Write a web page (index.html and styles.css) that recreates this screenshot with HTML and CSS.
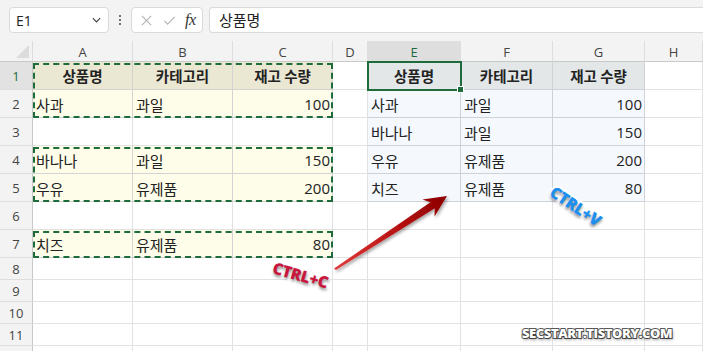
FILE: index.html
```html
<!DOCTYPE html>
<html>
<head>
    <link rel="stylesheet" href="styles.css">
</head>
<body>
    <div class="toolbar">
        <div class="namebox">
            <span>E1</span>
            <svg class="chev" viewBox="0 0 10 6"><path d="M1,1 L5,5 L9,1" fill="none" stroke="#444" stroke-width="1.3"/></svg>
        </div>
        <div class="dots"><i></i><i></i><i></i></div>
        <div class="fxbox">
            <svg viewBox="0 0 14 14" class="ico"><path d="M2,2 L12,12 M12,2 L2,12" stroke="#b4b4b4" stroke-width="1.2" fill="none"/></svg>
            <svg viewBox="0 0 14 14" class="ico"><path d="M1.5,7.5 L5,11 L12.5,3" stroke="#b4b4b4" stroke-width="1.2" fill="none"/></svg>
            <span class="fx">fx</span>
        </div>
        <div class="formula">상품명</div>
    </div>

    <div class="sheet">
        <div class="corner"><span class="tri"></span></div>
        <div class="ch">A</div><div class="ch">B</div><div class="ch">C</div><div class="ch">D</div>
        <div class="ch sel">E</div><div class="ch">F</div><div class="ch">G</div><div class="ch">H</div>

        <div class="rh sel">1</div>
        <div class="c hd">상품명</div><div class="c hd">카테고리</div><div class="c hd">재고 수량</div><div class="c"></div>
        <div class="c rhd">상품명</div><div class="c rhd">카테고리</div><div class="c rhd">재고 수량</div><div class="c"></div>

        <div class="rh">2</div>
        <div class="c dt">사과</div><div class="c dt">과일</div><div class="c dt num">100</div><div class="c"></div>
        <div class="c rdt">사과</div><div class="c rdt">과일</div><div class="c rdt num">100</div><div class="c"></div>

        <div class="rh">3</div>
        <div class="c"></div><div class="c"></div><div class="c"></div><div class="c"></div>
        <div class="c rdt">바나나</div><div class="c rdt">과일</div><div class="c rdt num">150</div><div class="c"></div>

        <div class="rh">4</div>
        <div class="c dt">바나나</div><div class="c dt">과일</div><div class="c dt num">150</div><div class="c"></div>
        <div class="c rdt">우유</div><div class="c rdt">유제품</div><div class="c rdt num">200</div><div class="c"></div>

        <div class="rh">5</div>
        <div class="c dt">우유</div><div class="c dt">유제품</div><div class="c dt num">200</div><div class="c"></div>
        <div class="c rdt">치즈</div><div class="c rdt">유제품</div><div class="c rdt num">80</div><div class="c"></div>

        <div class="rh">6</div>
        <div class="c"></div><div class="c"></div><div class="c"></div><div class="c"></div>
        <div class="c"></div><div class="c"></div><div class="c"></div><div class="c"></div>

        <div class="rh">7</div>
        <div class="c dt">치즈</div><div class="c dt">유제품</div><div class="c dt num">80</div><div class="c"></div>
        <div class="c"></div><div class="c"></div><div class="c"></div><div class="c"></div>

        <div class="rh">8</div>
        <div class="c"></div><div class="c"></div><div class="c"></div><div class="c"></div>
        <div class="c"></div><div class="c"></div><div class="c"></div><div class="c"></div>
        <div class="rh">9</div>
        <div class="c"></div><div class="c"></div><div class="c"></div><div class="c"></div>
        <div class="c"></div><div class="c"></div><div class="c"></div><div class="c"></div>
        <div class="rh">10</div>
        <div class="c"></div><div class="c"></div><div class="c"></div><div class="c"></div>
        <div class="c"></div><div class="c"></div><div class="c"></div><div class="c"></div>
        <div class="rh">11</div>
        <div class="c"></div><div class="c"></div><div class="c"></div><div class="c"></div>
        <div class="c"></div><div class="c"></div><div class="c"></div><div class="c"></div>
        <div class="rh"></div>
        <div class="c"></div><div class="c"></div><div class="c"></div><div class="c"></div>
        <div class="c"></div><div class="c"></div><div class="c"></div><div class="c"></div>

        <!-- copy ranges and active cell, laid over the cells -->
        <div class="ants ants-1"></div>
        <div class="ants ants-2"></div>
        <div class="ants ants-3"></div>
        <div class="active"><span class="handle"></span></div>
    </div>

    <svg class="arrow" viewBox="0 0 703 351">
        <defs>
            <linearGradient id="red" x1="335" y1="268" x2="447" y2="196" gradientUnits="userSpaceOnUse">
                <stop offset="0" stop-color="#e03a3a"/>
                <stop offset="0.6" stop-color="#b30f0f"/>
                <stop offset="1" stop-color="#8a0000"/>
            </linearGradient>
            <filter id="sh" x="-20%" y="-20%" width="140%" height="140%">
                <feDropShadow dx="1.5" dy="2" stdDeviation="1.5" flood-color="#000" flood-opacity="0.35"/>
            </filter>
        </defs>
        <polygon filter="url(#sh)" fill="url(#red)"
            points="334,268.5 430.5,202.2 422.5,199.5 447,196 434.5,216.5 434.8,208.3 336,270"/>
    </svg>

    <div class="sticker copy">CTRL+C</div>
    <div class="sticker paste">CTRL+V</div>
    <div class="mark">SECSTART.TISTORY.COM</div>
</body>
</html>
```

FILE: styles.css
```css
body {
    margin: 0;
    width: 703px;
    height: 351px;
    overflow: hidden;
    position: relative;
    background: #fff;
    font-family: "Noto Sans CJK KR", "Noto Sans", sans-serif;
    color: #222;
}

/* ---- formula bar ---- */
.toolbar {
    height: 41px;
    background: #f3f3f3;
    display: flex;
    align-items: flex-start;
    padding-top: 7px;
    box-sizing: border-box;
}

.namebox {
    margin-left: 9px;
    width: 100px;
    height: 26px;
    box-sizing: border-box;
    background: #fff;
    border: 1px solid #dadada;
    border-radius: 4px;
    display: flex;
    align-items: center;
    justify-content: space-between;
    padding: 0 7px 0 6px;
    font-family: "Open Sans", sans-serif;
    font-size: 14px;
    color: #222;
}

.chev {
    width: 9px;
    height: 6px;
}

.dots {
    width: 22px;
    height: 26px;
    display: flex;
    flex-direction: column;
    align-items: center;
    justify-content: center;
    gap: 2px;
}

.dots i {
    width: 2px;
    height: 2px;
    background: #444;
    border-radius: 1px;
}

.fxbox {
    width: 72px;
    height: 26px;
    box-sizing: border-box;
    background: #fff;
    border: 1px solid #dadada;
    border-radius: 4px;
    display: flex;
    align-items: center;
    padding: 0 6px 0 8px;
    gap: 10px;
}

.ico {
    width: 13px;
    height: 13px;
}

.fx {
    font-family: "Liberation Serif", serif;
    font-style: italic;
    font-size: 16px;
    color: #333;
    margin-left: -1px;
    letter-spacing: -0.5px;
}

.formula {
    margin-left: 6px;
    flex: 1;
    height: 26px;
    box-sizing: border-box;
    background: #fff;
    border: 1px solid #dadada;
    border-right: none;
    border-radius: 4px 0 0 4px;
    padding-left: 9px;
    font-size: 15px;
    line-height: 24px;
    color: #222;
}

/* ---- grid ---- */
.sheet {
    position: relative;
    display: grid;
    grid-template-columns: 33px 100px 100px 100px 35px 93px 92px 92px 58px;
    grid-template-rows: 21px repeat(7, 28px) repeat(5, 22px);
}

.corner {
    background: #f3f3f3;
    border-right: 1px solid #dcdcdc;
    border-bottom: 1px solid #c9c9c9;
    position: relative;
}

.tri {
    position: absolute;
    right: 3px;
    bottom: 3px;
    width: 0;
    height: 0;
    border-left: 13px solid transparent;
    border-bottom: 13px solid #dcdcdc;
}

.ch {
    background: #f3f3f3;
    border-right: 1px solid #dedede;
    border-bottom: 1px solid #c9c9c9;
    display: flex;
    align-items: center;
    justify-content: center;
    font-family: "Open Sans", sans-serif;
    font-size: 13px;
    color: #444;
    padding-top: 1px;
}

.ch.sel {
    background: #dedede;
    color: #1b6b3f;
}

.rh {
    background: #f3f3f3;
    border-right: 1px solid #c9c9c9;
    border-bottom: 1px solid #dedede;
    display: flex;
    align-items: center;
    justify-content: center;
    font-family: "Open Sans", sans-serif;
    font-size: 13px;
    color: #444;
}

.rh.sel {
    background: #e2e2e2;
    color: #1b6b3f;
}

.c {
    border-right: 1px solid #e2e2e2;
    border-bottom: 1px solid #e2e2e2;
    display: flex;
    align-items: center;
    padding: 1px 3px 0 3px;
    font-size: 15px;
    line-height: 1;
    white-space: nowrap;
    overflow: hidden;
}

.hd {
    background: #eae7d3;
    border-color: #d3d3d3;
    justify-content: center;
    font-weight: 700;
    font-size: 14.5px;
}

.dt {
    background: #fefde9;
    border-color: #d3d3d3;
}

.rhd {
    background: #e3e7e8;
    border-color: #cfd3d8;
    justify-content: center;
    font-weight: 700;
    font-size: 14.5px;
}

.rdt {
    background: #f5f9fd;
    border-color: #cfd3d8;
}

.num {
    justify-content: flex-end;
    font-family: "Open Sans", sans-serif;
    font-size: 15px;
    padding-right: 2px;
}

/* absolutely placed grid children take their grid area as box */
.ants {
    position: absolute;
    inset: 1px 0 0 0;
    grid-column: 2 / 5;
    border: 2px dashed #1e6b3c;
    pointer-events: none;
}

.ants-1 { grid-row: 2 / 4; }
.ants-2 { grid-row: 5 / 7; }
.ants-3 { grid-row: 8 / 9; }

.active {
    position: absolute;
    inset: -1px;
    grid-column: 6 / 7;
    grid-row: 2 / 3;
    border: 2px solid #1e6b3c;
}

.handle {
    position: absolute;
    right: -4px;
    bottom: -4px;
    width: 5px;
    height: 5px;
    background: #1e6b3c;
    border: 1px solid #fff;
}

/* ---- annotations ---- */
.arrow {
    position: absolute;
    left: 0;
    top: 0;
    width: 703px;
    height: 351px;
    pointer-events: none;
}

.sticker {
    position: absolute;
    font-family: "Open Sans", sans-serif;
    font-weight: 800;
    font-size: 16px;
    letter-spacing: -0.5px;
    -webkit-text-stroke: 4px #fff;
    paint-order: stroke fill;
    text-shadow: 1px 2px 3px rgba(0,0,0,0.45);
}

.copy {
    left: 272px;
    top: 264px;
    color: #c8163c;
    transform: rotate(16deg);
}

.paste {
    left: 547px;
    top: 195px;
    color: #1c8ff0;
    transform: rotate(34deg);
}

.mark {
    position: absolute;
    left: 522px;
    top: 324px;
    font-family: "Open Sans", sans-serif;
    font-weight: 800;
    font-size: 13px;
    letter-spacing: -0.4px;
    color: #fff;
    -webkit-text-stroke: 2px #5a5a5a;
    paint-order: stroke fill;
    text-shadow: 1px 2px 3px rgba(0,0,0,0.4);
}
```
